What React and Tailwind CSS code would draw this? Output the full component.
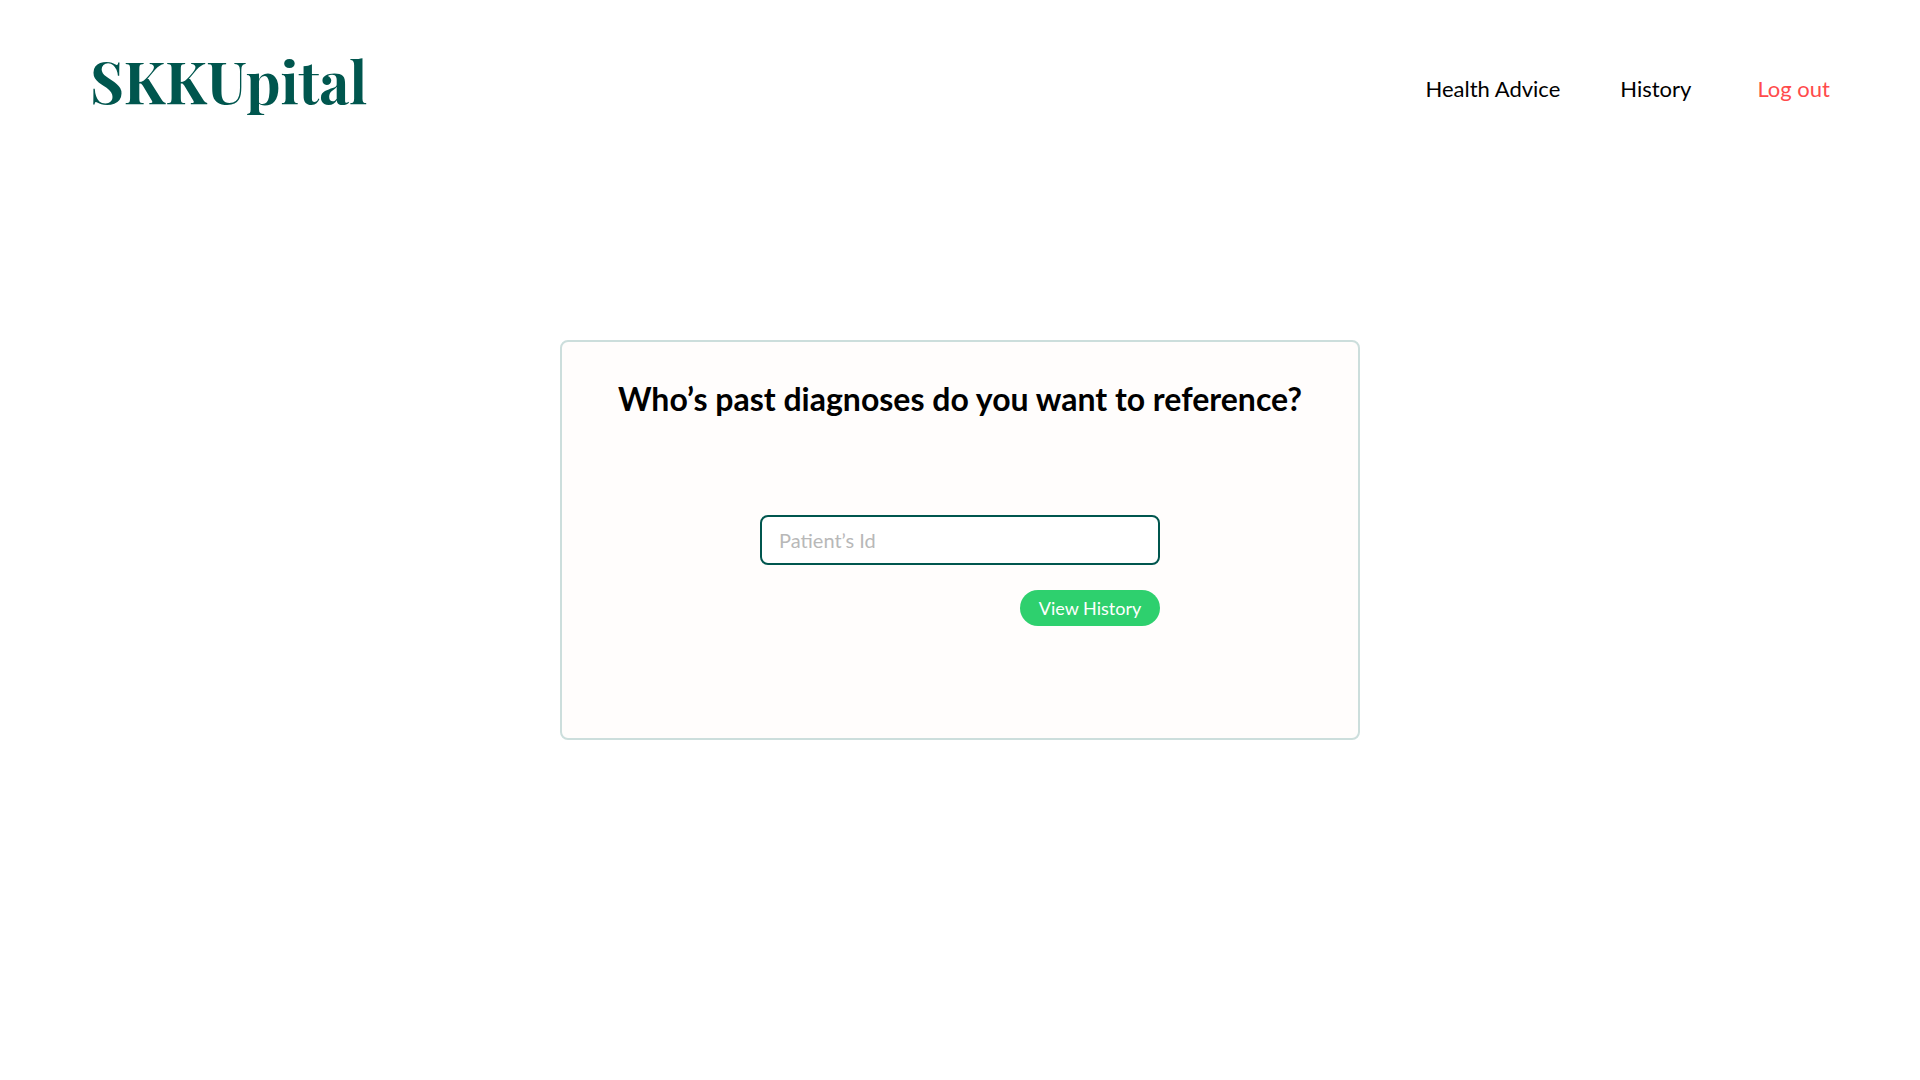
export default function App() {
  return (
    <div className="flex min-h-screen flex-col bg-white font-['Lato',sans-serif] text-black">
      <header className="flex items-center justify-between px-[90px] pt-10">
        <a href="#home" className="font-['Playfair_Display','Liberation_Serif',serif] text-[58px] leading-[80px] font-bold text-[#00564e]">
          SKKUpital
        </a>
        <nav className="mt-[18px] flex items-center text-[22px] leading-8">
          <a href="#advice">Health Advice</a>
          <a href="#history" className="ml-[60px]">History</a>
          <a href="#logout" className="ml-[66px] text-[#ff4b4b]">Log out</a>
        </nav>
      </header>
      <main className="flex justify-center pt-[220px]">
        <form className="flex min-h-[400px] w-full max-w-[800px] flex-col items-center rounded-lg border-2 border-[#ccdedc] bg-[#fffdfc] pt-[37px]">
          <h1 className="text-[32px] leading-10 font-bold">Who’s past diagnoses do you want to reference?</h1>
          <div className="mt-24 flex w-full max-w-[400px] flex-col items-end gap-[25px]">
            <input
              type="text"
              aria-label="Patient’s Id"
              placeholder="Patient’s Id"
              className="h-[50px] w-full rounded-lg border-2 border-[#00564e] bg-white px-[17px] text-xl placeholder:text-[#b8b8b8]"
            />
            <button type="button" className="h-9 w-[140px] rounded-full bg-[#2ed06e] text-center text-lg leading-9 text-white">
              View History
            </button>
          </div>
        </form>
      </main>
    </div>
  );
}
